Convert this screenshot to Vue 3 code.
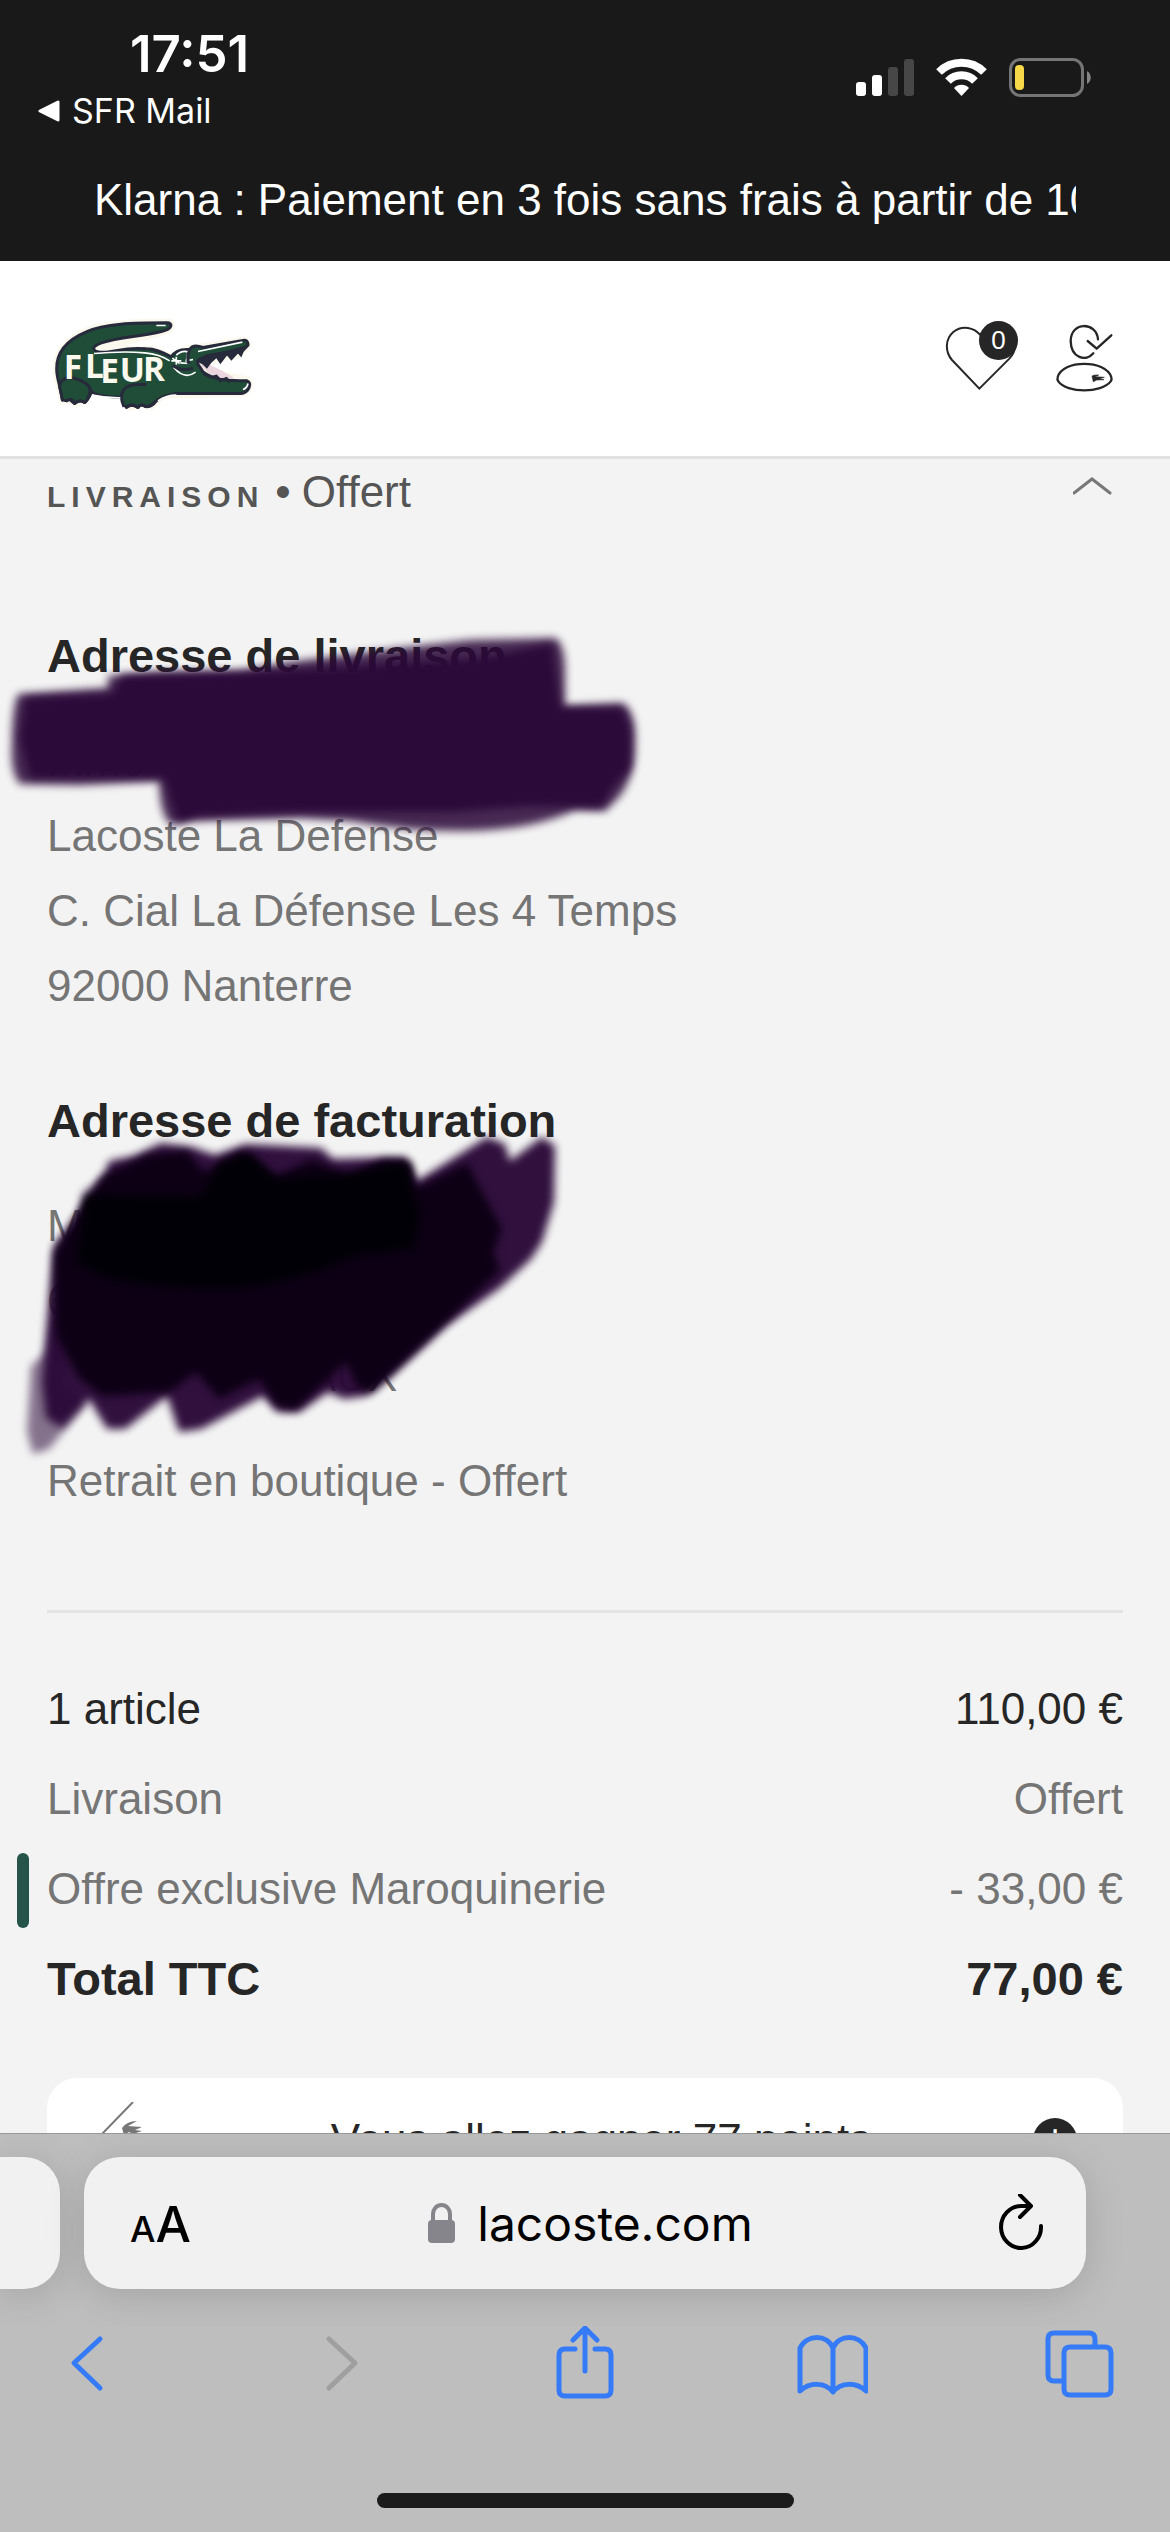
<template>
  <div class="page">
    <div class="top">
      <div class="status">
        <div class="status-left">
          <span class="time">17:51</span>
          <a class="back-app" href="#">
            <svg width="22" height="22" viewBox="0 0 22 22"><path d="M20 2v18L2 11z" fill="#fff" stroke="#fff" stroke-width="3" stroke-linejoin="round" /></svg>
            SFR Mail
          </a>
        </div>
        <div class="status-right">
          <svg width="58" height="39" viewBox="0 0 58 39">
            <rect y="24" width="10" height="14" rx="3" fill="#fff" />
            <rect x="16" y="17" width="10" height="21" rx="3" fill="#fff" />
            <rect x="32" y="9" width="10" height="29" rx="3" fill="#474747" />
            <rect x="48" y="1" width="10" height="37" rx="3" fill="#474747" />
          </svg>
          <svg width="51" height="39" viewBox="0 0 51 39">
            <path d="M3 14A32 32 0 0 1 48 14M12 23A19 19 0 0 1 39 23" fill="none" stroke="#fff" stroke-width="8" />
            <path d="M25.500 38l-7.500-8a10.500 10.500 0 0 1 15 0z" fill="#fff" />
          </svg>
          <svg width="82" height="39" viewBox="0 0 82 39">
            <rect x="1.500" y="1.500" width="72" height="36" rx="10" fill="none" stroke="#757575" stroke-width="3" />
            <rect x="6" y="7" width="9" height="25" rx="4" fill="#f7d848" />
            <path d="M78 13c5 3 5 10 0 13z" fill="#858585" />
          </svg>
        </div>
      </div>
      <p class="promo">Klarna : Paiement en 3 fois sans frais à partir de 100€</p>
    </div>

    <header class="header">
      <a class="logo" href="#" aria-label="Lacoste">
        <svg width="200" height="107" viewBox="70 45 600 320">
          <g stroke="#fbf8ee" stroke-width="22" stroke-linejoin="round">
            <path d="M410 96C300 98 220 100 165 125C110 150 80 190 80 235C80 270 92 290 98 330L120 328L135 340L160 328L185 300L285 318L300 352L345 340L365 348L400 315L640 308C660 300 662 275 652 270L520 240L505 222L630 190L655 165L645 150L520 170L480 175L420 200L370 178L200 180L415 120C430 110 425 95 410 96Z" fill="#fbf8ee" />
          </g>
          <g fill="#204d37" stroke="#262a3a" stroke-width="9" stroke-linejoin="round">
            <path d="M412 98C310 98 225 100 170 125C110 150 80 190 81 237C82 270 92 285 98 330Q106 318 120 328L135 340Q150 326 165 337C180 325 184 308 184 303Q195 318 272 322C290 300 275 330 290 352Q305 338 325 352Q330 338 347 349Q365 352 380 332Q400 315 440 310L635 310C658 306 668 280 652 272C610 270 560 275 520 245L505 222Q500 210 515 205L600 190L635 185L655 165Q655 145 635 152L520 172Q490 160 480 178Q440 175 425 200C395 185 375 176 350 176C290 170 270 182 230 186C185 188 180 170 215 158C270 140 330 140 395 124C430 116 430 98 412 98Z" />
            <path d="M90 290C92 265 115 255 150 270Q190 288 180 310Q172 335 165 337Q150 326 135 340Q125 320 112 332Q96 330 97 322Z" />
            <path d="M283 350C265 310 280 285 320 283L350 283M290 352Q305 338 325 352Q335 338 347 349Q365 350 378 332" />
          </g>
          <path d="M512 225L530 220C560 232 590 248 615 264Q565 268 540 250Z" fill="#edd5df" />
          <path d="M498 212L530 192L590 182L650 166L643 182L635 202L625 190L605 212L592 196L572 222L560 204L545 218L532 236L520 224Z" fill="#262a3a" />
          <path d="M505 184L638 156M193 190Q280 182 345 188Q390 192 420 212M380 106h28M188 315Q230 324 272 323M385 332Q410 315 440 315M640 298Q652 294 655 280M432 232Q465 270 498 246" fill="none" stroke="#fff" stroke-width="5" />
          <path d="M440 195Q455 180 475 185L470 212L490 208M452 218L480 220M425 212h30M440 200v24M428 204l22 16" fill="none" stroke="#fff" stroke-width="5" />
          <path d="M480 180Q470 200 478 222M430 225Q450 245 490 235M520 250L545 262L560 258L572 272L590 265L600 275" fill="none" stroke="#262a3a" stroke-width="9" />
          <g class="logo-text">
            <text x="102" y="268">F</text>
            <text x="166" y="264">L</text>
            <text x="212" y="280">E</text>
            <text x="270" y="276">U</text>
            <text x="340" y="274">R</text>
          </g>
        </svg>
      </a>
      <nav class="header-nav">
        <button class="icon-button" aria-label="Favoris">
          <svg width="74" height="77" viewBox="75 90 222 231">
            <path d="M178 296L96 210C74 184 76 146 100 126C128 104 162 114 180 134C200 108 250 106 272 134C292 160 286 186 268 206Z" fill="none" stroke="#262626" stroke-width="6" />
          </svg>
          <span class="badge">0</span>
        </button>
        <button class="icon-button" aria-label="Mon compte">
          <svg width="60" height="71" viewBox="405 99 180 213">
            <g fill="none" stroke="#262626" stroke-width="7" stroke-linecap="round" stroke-linejoin="round">
              <path d="M534 148C530 96 453 92 452 153C453 205 498 216 520 190M503 153L530 176L574 136" />
              <path d="M413 262C425 208 560 208 574 262Q576 268 572 274C545 310 440 310 415 274Q411 268 413 262Z" />
            </g>
            <path d="M516 258Q522 254 536 255L524 260L553 262L538 266L552 269L530 270L520 275Z" fill="#262626" stroke="#262626" stroke-width="2" />
          </svg>
        </button>
      </nav>
    </header>

    <main class="content">
      <button class="accordion" aria-expanded="true">
        <span class="accordion-title">
          <strong class="step">LIVRAISON</strong>
          <span>•</span>
          <span>Offert</span>
        </span>
        <svg width="50" height="22" viewBox="0 0 50 22"><path d="M1 18L19 4L37 18" fill="none" stroke="#777" stroke-width="3" stroke-linecap="round" /></svg>
      </button>

      <section class="address">
        <h2>Adresse de livraison</h2>
        <p v-for="line in shipping" :key="line">{{ line }}</p>
        <svg class="scribble" width="700" height="260" viewBox="0 0 700 260">
          <g fill="#2b0939">
            <path class="soft" opacity=".86" d="M18 76L108 70V58L160 54L240 53L290 44L400 30L470 22L555 20Q566 26 565 60V88L622 85Q636 92 635 125Q636 155 620 178L605 193L575 192Q530 213 460 213Q405 213 350 203L300 200L190 203L172 207Q160 200 159 163L80 167L20 166Q10 155 12 125Q12 90 18 76Z" />
            <path class="soft" d="M26 80L112 76L122 58L250 54L330 50L420 44L480 40L552 26L560 90L622 90L630 110V150L612 170L602 189L530 188L450 194L350 194L300 194L200 198L178 204L164 160L30 160L20 120Z" />
          </g>
        </svg>
      </section>

      <section class="address">
        <h2>Adresse de facturation</h2>
        <p v-for="line in billing" :key="line">{{ line }}</p>
        <p class="cut">AUX</p>
        <svg class="scribble" width="700" height="400" viewBox="0 0 700 400">
          <path class="soft" opacity=".55" fill="#2b0939" d="M83 109L105 93L60 300L86 320L49 366L33 371L27 349L31 283L47 269Z" />
          <path class="soft" fill="#2b0939" opacity=".97" d="M161 60L192 64L215 72L246 61L321 65L333 76L406 74L417 98L487 54L505 61L510 78L542 54L555 63L554 119L542 159L531 176L500 205L446 243L388 296L366 313L344 316L328 309L299 329L277 329L263 313L201 346L179 349L167 313L125 346L107 346L89 316L62 345L46 335L42 300L49 213L54 163L83 125L105 90L109 78L134 73Z" />
          <path class="soft" fill="#0d0015" d="M54 170L70 145L103 93L147 72L187 68L205 90L241 68L277 93L312 76L348 93L384 76L411 80L415 106L467 80L502 146L493 169L500 187L442 243L370 310L357 303L346 279L295 327L277 323L259 296L219 316L196 289L170 309L103 313L80 296L56 253Z" />
          <path class="soft" fill="#020007" d="M85 112L201 113L219 80L250 70L275 95L350 90L406 79L420 129L415 166L357 173Q280 206 223 206Q160 206 107 196L76 180Z" />
        </svg>
      </section>

      <p class="method">Retrait en boutique - Offert</p>

      <dl class="summary">
        <div v-for="row in rows" :key="row.label" class="row" :class="row.type">
          <dt>{{ row.label }}</dt>
          <dd>{{ row.value }}</dd>
        </div>
      </dl>

      <div class="points">
        <svg width="68" height="60" viewBox="0 0 68 60">
          <path d="M0 33L32 0" fill="none" stroke="#777" stroke-width="2" />
          <path d="M21 26Q26 19 36 19L27 24L41 25L34 28L41 29L32 32L28 30L23 33Z" fill="#777" />
        </svg>
        <span>Vous allez gagner 77 points</span>
        <button class="plus" aria-label="Informations">+</button>
      </div>
    </main>

    <footer class="browser">
      <div class="tabs-row">
        <div class="prev-tab"></div>
        <div class="url-bar">
          <button class="text-size" aria-label="Taille du texte">
            <span class="small-a">A</span>
            <span>A</span>
          </button>
          <a class="url" href="#">
            <svg width="27" height="40" viewBox="0 0 27 40">
              <path d="M5 19V11a8.500 9 0 0 1 17 0V19" fill="none" stroke="#86858b" stroke-width="4" />
              <rect y="17" width="27" height="23" rx="4" fill="#86858b" />
            </svg>
            lacoste.com
          </a>
          <button class="icon-button" aria-label="Actualiser">
            <svg width="54" height="58" viewBox="-8 0 54 58">
              <g fill="none" stroke="#000" stroke-width="4" stroke-linecap="round" stroke-linejoin="round">
                <path d="M43 32A20 21 0 1 1 23 12H33M22 1L33 12L22 23" />
              </g>
            </svg>
          </button>
        </div>
      </div>
      <nav class="toolbar">
        <button v-for="tool in tools" :key="tool.name" class="icon-button" :class="{ disabled: tool.disabled }" :aria-label="tool.name">
          <svg width="72" height="76" viewBox="0 0 72 76"><path :d="tool.path" /></svg>
        </button>
      </nav>
      <div class="home-bar"></div>
    </footer>
  </div>
</template>

<script setup>
import { ref } from "vue";

const shipping = ref([
  "Mme",
  "Lacoste La Defense",
  "C. Cial La Défense Les 4 Temps",
  "92000 Nanterre",
]);
const billing = ref(["M", "6"]);

const rows = ref([
  { label: "1 article", value: "110,00 €", type: "dark" },
  { label: "Livraison", value: "Offert" },
  { label: "Offre exclusive Maroquinerie", value: "- 33,00 €", type: "promo-row" },
  { label: "Total TTC", value: "77,00 €", type: "total" },
]);

const tools = [
  { name: "Précédent", path: "M50 13L24 37L50 62" },
  { name: "Suivant", path: "M30 13L56 37L30 62", disabled: true },
  {
    name: "Partager",
    path: "M28 23H18Q12 23 12 29V64Q12 70 18 70H58Q64 70 64 64V29Q64 23 58 23H48M38 45V3M26 14L38 2L50 14",
  },
  {
    name: "Signets",
    path: "M37 22C31 8 11 8 4 22V65C14 56 29 56 37 66C45 56 60 56 70 65V22C63 8 43 8 37 22V65",
  },
  {
    name: "Onglets",
    path: "M51 21V13Q51 7 45 7H10Q4 7 4 13V49Q4 55 10 55H20M26 21H61Q67 21 67 27V63Q67 69 61 69H26Q20 69 20 63V27Q20 21 26 21Z",
  },
];
</script>

<style>
body {
  background: #f3f3f3;
}
</style>

<style scoped>
.page {
  display: flex;
  flex-direction: column;
  height: 100vh;
  background: #f3f3f3;
  color: #757575;
  font-family: "Liberation Sans", Arial, sans-serif;
  font-size: 44px;
  line-height: 75px;
}

h2,
p,
dl,
dd {
  margin: 0;
}

svg {
  display: block;
}

button {
  padding: 0;
  border: 0;
  background: none;
  color: inherit;
  font: inherit;
}

a {
  color: inherit;
  text-decoration: none;
}

.icon-button {
  position: relative;
}

/* barre d'état + bandeau promo */
.top {
  background: #191919;
  color: #fff;
  padding-bottom: 24px;
}

.status {
  display: flex;
  justify-content: space-between;
  padding: 24px 79px 31px 38px;
  font-family: Inter, sans-serif;
}

.status-left {
  display: flex;
  flex-direction: column;
  gap: 7px;
}

.time {
  padding-left: 92px;
  font-size: 51px;
  font-weight: 600;
  line-height: 60px;
}

.back-app {
  display: flex;
  align-items: center;
  gap: 12px;
  font-size: 34px;
  line-height: 40px;
}

.status-right {
  display: flex;
  gap: 22px;
  padding-top: 34px;
}

.promo {
  margin: 0 94px;
  overflow: hidden;
  white-space: nowrap;
}

.header {
  display: flex;
  align-items: center;
  justify-content: space-between;
  height: 195px;
  padding: 0 55px 0 53px;
  background: #fff;
  border-bottom: 3px solid #e1e1e1;
  flex-shrink: 0;
}

.logo-text {
  fill: #fbf8ee;
  font-family: "Open Sans", sans-serif;
  font-size: 100px;
  font-weight: bold;
}

.header-nav {
  display: flex;
  align-items: center;
  gap: 36px;
}

.badge {
  position: absolute;
  top: 1px;
  right: 1px;
  width: 39px;
  height: 39px;
  border-radius: 50%;
  background: #262626;
  color: #fff;
  font-size: 26px;
  line-height: 38px;
}

.content {
  flex: 1;
  min-height: 0;
  overflow: hidden;
  padding: 0 47px;
}

.accordion {
  display: flex;
  align-items: flex-start;
  justify-content: space-between;
  width: 100%;
  margin-bottom: 94px;
  color: #555;
  line-height: 65px;
}

.accordion svg {
  margin-top: 16px;
}

.accordion-title {
  display: flex;
  align-items: baseline;
  height: 65px;
  gap: 11px;
}

.step {
  font-size: 30px;
  letter-spacing: 6px;
}

.address {
  position: relative;
  margin-bottom: 60px;
}

.address h2 {
  margin-bottom: 30px;
  color: #262626;
  font-size: 47px;
}

.address + .address {
  margin-bottom: 30px;
}

.cut {
  padding-left: 260px;
}

.scribble {
  position: absolute;
  top: 0;
  left: -47px;
  overflow: visible;
}

.soft {
  filter: blur(4px);
}

.method {
  padding-bottom: 92px;
  border-bottom: 3px solid #e3e3e3;
}

.summary {
  display: flex;
  flex-direction: column;
  gap: 15px;
  padding: 58px 0 62px;
}

.row {
  position: relative;
  display: flex;
  justify-content: space-between;
}

.dark,
.total {
  color: #262626;
}

.total {
  font-size: 47px;
  font-weight: bold;
}

.promo-row::before {
  content: "";
  position: absolute;
  top: 2px;
  left: -30px;
  width: 12px;
  height: 75px;
  border-radius: 6px;
  background: #26544b;
}

.points {
  display: flex;
  align-items: flex-start;
  justify-content: space-between;
  padding: 24px 46px 24px 54px;
  border-radius: 30px;
  background: #fff;
  color: #262626;
}

.plus {
  width: 44px;
  height: 44px;
  margin-top: 16px;
  border-radius: 50%;
  background: #262626;
  color: #fff;
  font-size: 44px;
  line-height: 44px;
}

/* navigateur */
.browser {
  flex-shrink: 0;
  padding-bottom: 24px;
  border-top: 1px solid #999;
  background: #bebebe;
  color: #000;
  font-family: Inter, sans-serif;
}

.tabs-row {
  display: flex;
  gap: 24px;
  padding: 23px 84px 37px 0;
  overflow: hidden;
}

.prev-tab,
.url-bar {
  height: 132px;
  background: #f1f1f1;
  box-shadow: 0 6px 40px rgba(0, 0, 0, 0.14);
}

.prev-tab {
  width: 60px;
  border-radius: 0 36px 36px 0;
}

.url-bar {
  display: flex;
  flex: 1;
  align-items: center;
  justify-content: space-between;
  box-sizing: border-box;
  padding: 0 42px 0 46px;
  border-radius: 36px;
}

.text-size {
  display: flex;
  align-items: baseline;
  padding-top: 6px;
  font-size: 50px;
  font-weight: 500;
  line-height: 60px;
}

.small-a {
  font-size: 36px;
}

.url {
  display: flex;
  align-items: center;
  gap: 22px;
  font-size: 48px;
}

.toolbar {
  display: flex;
  justify-content: space-between;
  padding: 0 54px 91px 50px;
}

.toolbar path {
  fill: none;
  stroke: #357bf7;
  stroke-width: 5;
  stroke-linecap: round;
  stroke-linejoin: round;
}

.toolbar .disabled path {
  stroke: #9f9f9f;
}

.home-bar {
  width: 417px;
  height: 15px;
  margin: 0 auto;
  border-radius: 8px;
  background: #1b1b1b;
}
</style>
